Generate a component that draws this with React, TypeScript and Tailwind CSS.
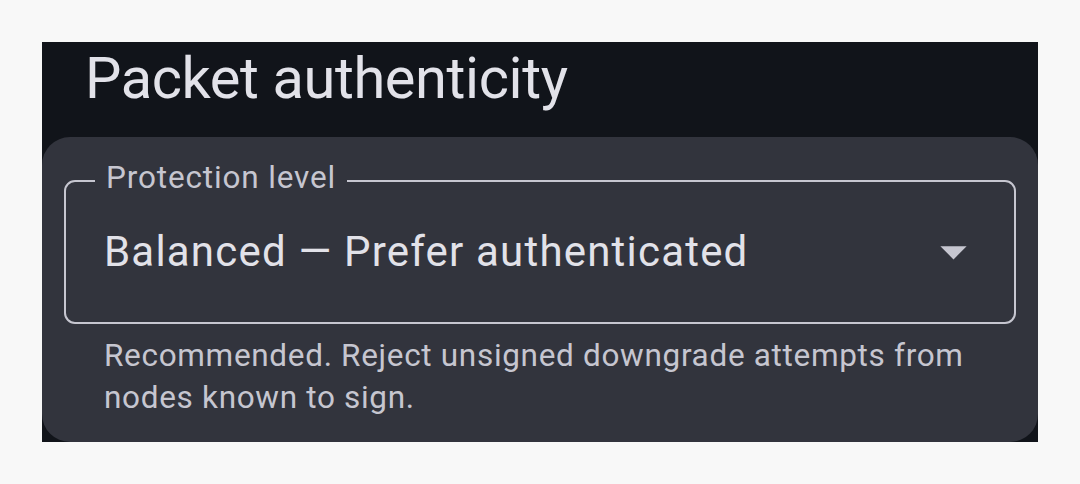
import React from "react";

export default function App() {
  const font = { fontFamily: "Roboto, 'Noto Sans', sans-serif" };
  return (
    <div className="min-h-screen w-full bg-[#f8f8f8] pt-[42px] pl-[42px]" style={font}>
      <div className="flex h-[400px] w-[996px] flex-col bg-[#11141a]">
        <div className="pl-[43px] text-[57.75px] leading-[73.5px] tracking-[-0.4px] text-[#e2e2e9]">Packet authenticity</div>
        <div className="mt-[21px] flex-1 rounded-[28px] bg-[#32343d] px-[22px] pt-[43px]">
          <div className="relative flex h-[144px] items-center rounded-[11px] border-2 border-[#c6c6d0] pl-[38px] pr-[29px]">
            <span className="flex-1 text-[42px] leading-[56px] tracking-[1.2px] text-[#e2e2e9]">
              Balanced — Prefer authenticated
            </span>
            <svg width="63" height="63" viewBox="0 0 24 24" className="shrink-0">
              <path d="M7 10l5 5 5-5z" fill="#c6c6d0" />
            </svg>
            <span className="absolute left-[29px] top-[-25px] bg-[#32343d] px-[11px] text-[31.5px] leading-[42px] tracking-[0.85px] text-[#c6c6d0]">
              Protection level
            </span>
          </div>
          <p className="mt-[11px] pl-[40px] pr-[16px] text-[31.5px] leading-[42px] tracking-[0.68px] text-[#c6c6d0]">
            Recommended. Reject unsigned downgrade attempts from nodes known to sign.
          </p>
        </div>
      </div>
    </div>
  );
}
